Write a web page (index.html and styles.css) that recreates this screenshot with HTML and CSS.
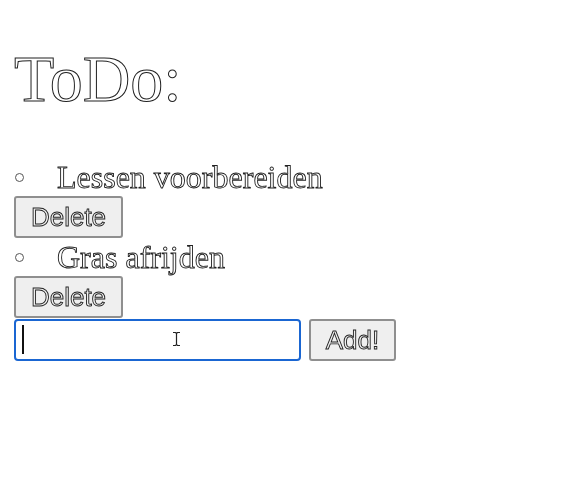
FILE: index.html
```html
<!DOCTYPE html>
<html>
<head>
<meta charset="utf-8">
<link rel="stylesheet" href="styles.css">
</head>
<body>
<h1 class="title">ToDo:</h1>
<ul class="todo-list">
  <li class="todo-item">
    <div class="item-row"><span class="bullet"></span><span class="item-text">Lessen voorbereiden</span></div>
    <button class="btn">Delete</button>
  </li>
  <li class="todo-item">
    <div class="item-row"><span class="bullet"></span><span class="item-text">Gras afrijden</span></div>
    <button class="btn">Delete</button>
  </li>
</ul>
<div class="add-row">
  <div class="input-wrap">
    <input class="new-input" type="text">
    <span class="caret"></span>
    <svg class="ibeam" width="9" height="16" viewBox="0 0 9 16"><path d="M1 1.5h2.5l1 1 1-1H8M4.5 2.5v11M1 14.5h2.5l1-1 1 1H8" fill="none" stroke="#222" stroke-width="1.2"/></svg>
  </div>
  <button class="btn">Add!</button>
</div>
</body>
</html>
```
FILE: styles.css
```css
html, body {
  margin: 0;
  padding: 0;
  background: #fff;
}
body {
  padding: 0 14px;
  font-family: "Liberation Serif", "Times New Roman", serif;
}
.title {
  margin: 41px 0 0 0;
  font-size: 66px;
  line-height: 76px;
  font-weight: normal;
  color: transparent;
  -webkit-text-stroke: 1px #222;
  filter: grayscale(1);
}
.todo-list {
  list-style: none;
  margin: 41px 0 0 0;
  padding: 0;
}
.todo-item {
  display: flex;
  flex-direction: column;
  align-items: flex-start;
}
.item-row {
  display: flex;
  align-items: center;
  height: 38px;
  font-size: 32px;
  line-height: 38px;
  color: transparent;
  -webkit-text-stroke: 0.9px #222;
  filter: grayscale(1);
}
.bullet {
  width: 7px;
  height: 7px;
  border: 1px solid #555;
  border-radius: 50%;
  margin: 0 33px 0 1px;
  flex: none;
}
.btn {
  font-family: "Liberation Sans", Arial, sans-serif;
  font-size: 26px;
  height: 42px;
  padding: 0 14px;
  background: #efefef;
  border: 2px solid #8f8f8f;
  border-radius: 3px;
  color: transparent;
  -webkit-text-stroke: 0.9px #222;
  filter: grayscale(1);
  margin: 0;
}
.todo-item .btn {
  width: 109px;
}
.add-row {
  display: flex;
  align-items: center;
  gap: 8px;
  margin-top: 1px;
}
.add-row .btn {
  width: 87px;
}
.input-wrap {
  position: relative;
  width: 287px;
  height: 42px;
}
.new-input {
  box-sizing: border-box;
  width: 100%;
  height: 100%;
  margin: 0;
  border: 2px solid #1a66d2;
  border-radius: 4px;
  outline: none;
  background: #fff;
  font-size: 26px;
}
.caret {
  position: absolute;
  left: 8px;
  top: 6px;
  width: 2px;
  height: 29px;
  background: #111;
}
.ibeam {
  position: absolute;
  left: 158px;
  top: 12px;
}
```
